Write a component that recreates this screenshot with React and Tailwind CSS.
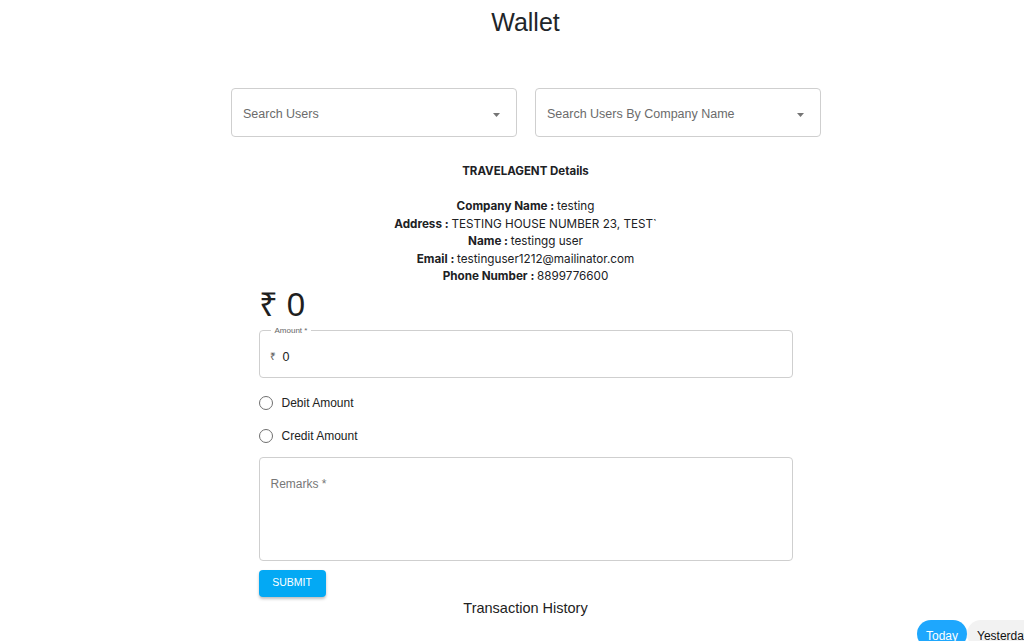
import React from 'react';

const Select = ({ label }) => (
  <div className="w-[286px] h-[49px] border border-[#cfcfcf] rounded-[4px] flex items-center justify-between pl-[11px] pr-[16px] pt-[4px]">
    <span className="text-[12.5px] text-[#6b6b6b]">{label}</span>
    <svg width="7" height="4" viewBox="0 0 7 4"><path d="M0 0h7L3.5 4z" fill="#757575" /></svg>
  </div>
);

const Radio = ({ label }) => (
  <label className="flex items-center gap-[9px] h-[33px]">
    <span className="w-[14px] h-[14px] rounded-full border-[1.5px] border-[#6f6f6f]" />
    <span className="text-[12px] text-[#222]">{label}</span>
  </label>
);

export default function App() {
  const details = [
    ['Company Name', 'testing'],
    ['Address', 'TESTING HOUSE NUMBER 23, TEST`'],
    ['Name', 'testingg user'],
    ['Email', 'testinguser1212@mailinator.com'],
    ['Phone Number', '8899776600'],
  ];

  return (
    <div className="w-[1024px] h-[641px] overflow-hidden bg-white text-[#1f2328] font-['Liberation_Sans',Arial,sans-serif]">
      <div className="pl-[27px]">
        <h1 className="text-center text-[25px] leading-[30px] pt-[7px] text-[#212529]">Wallet</h1>

        <div className="flex justify-center gap-[18px] mt-[51px] pl-[1px]">
          <Select label="Search Users" />
          <Select label="Search Users By Company Name" />
        </div>

        <div className="text-center font-['Inter',sans-serif] text-[#202124] mt-[26px]">
          <div className="text-[11.5px] font-bold leading-[16px]">TRAVELAGENT Details</div>
          <div className="mt-[19px] text-[11.7px] leading-[17.5px]">
            {details.map(([k, v]) => (
              <div key={k}><span className="font-bold">{k} : </span>{v}</div>
            ))}
          </div>
        </div>

        <div className="w-[534px] mx-auto">
          <div className="text-[33px] leading-[36px] mt-[1px] text-[#1f1f1f]">₹ 0</div>

          <fieldset className="mt-[7px] h-[53px] border border-[#cfcfcf] rounded-[4px] px-[10px] -translate-y-[5px]">
            <legend className="text-[8px] text-[#666] px-[4px] ml-[1px]">Amount *</legend>
            <div className="flex items-center gap-[7px] pt-[11px]">
              <span className="text-[10px] text-[#555]">₹</span>
              <span className="text-[12.5px] text-[#222]">0</span>
            </div>
          </fieldset>

          <div className="mt-[4px]">
            <Radio label="Debit Amount" />
            <Radio label="Credit Amount" />
          </div>

          <div className="mt-[4px] h-[104px] border border-[#cfcfcf] rounded-[4px] pl-[11px] pt-[13px]">
            <span className="text-[12px] text-[#777]">Remarks *</span>
          </div>

          <button className="mt-[9px] w-[67px] h-[27px] bg-[#03a9f4] text-white text-[10.5px] font-medium rounded-[4px] shadow-[0_2px_3px_rgba(0,0,0,0.25)]">
            SUBMIT
          </button>
        </div>

        <div className="text-center text-[14.5px] text-[#222] mt-[1px]">Transaction History</div>
      </div>

      <div className="flex pl-[917px] mt-[1px] whitespace-nowrap">
        <span className="h-[28px] px-[9px] pt-[7px] rounded-full bg-[#1ea7fd] text-white text-[12px]">Today</span>
        <span className="h-[28px] px-[10px] pt-[7px] rounded-full bg-[#f2f2f2] text-[#111] text-[12px]">Yesterday</span>
      </div>
    </div>
  );
}
